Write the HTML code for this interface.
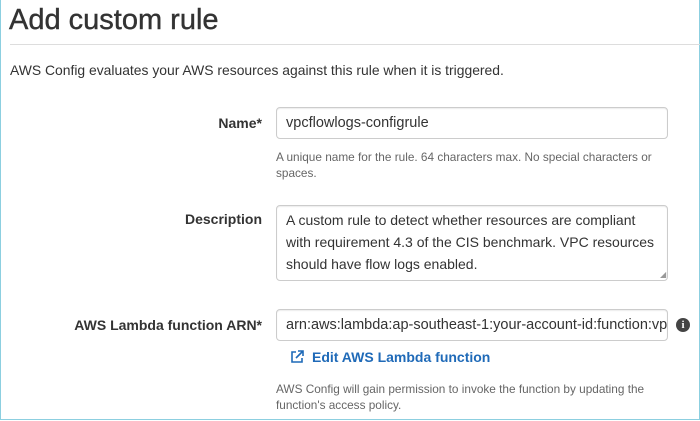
<!DOCTYPE html>
<html><head><style>
body{margin:0;width:700px;height:421px;overflow:hidden;background:#fff;font-family:"Liberation Sans",sans-serif;color:#333}
.frame{position:absolute;left:0;top:0;width:698px;height:419px;border:1px solid #8ccfe0;border-top:none}
.a{position:absolute;white-space:nowrap}
.lbl{font-weight:bold;font-size:14px;text-align:right;width:262px;left:0}
.in{position:absolute;left:276px;width:392px;border:1px solid #ccc;border-radius:4px;box-sizing:border-box;font-size:14.5px;color:#333;padding:0 9px;box-shadow:inset 0 1px 1px rgba(0,0,0,.08)}
.help{font-size:11.8px;color:#666;left:276px;line-height:16px}
</style></head><body>
<div class="frame"></div>
<div class="a" style="left:9px;top:4px;font-size:29px;color:#333;-webkit-text-stroke:0.4px #333">Add custom rule</div>
<div style="position:absolute;left:10px;top:44px;width:690px;height:1px;background:#ddd"></div>
<div class="a" style="left:10px;top:62px;font-size:13.9px">AWS Config evaluates your AWS resources against this rule when it is triggered.</div>
<div class="a lbl" style="top:115px">Name*</div>
<div class="in" style="top:107px;height:32px;line-height:30px">vpcflowlogs-configrule</div>
<div class="a help" style="top:149px">A unique name for the rule. 64 characters max. No special characters or<br>spaces.</div>
<div class="a lbl" style="top:211px">Description</div>
<div class="in" style="top:205px;height:76px;line-height:22px;padding-top:3px;white-space:nowrap;font-size:14px">A custom rule to detect whether resources are compliant<br>with requirement 4.3 of the CIS benchmark. VPC resources<br>should have flow logs enabled.</div>
<div class="a" style="left:660px;top:270px;font-size:8px;color:#999">◢</div>
<div class="a lbl" style="top:317px">AWS Lambda function ARN*</div>
<div class="in" style="top:309px;height:32px;line-height:30px;overflow:hidden;white-space:nowrap">arn:aws:lambda:ap-southeast-1:your-account-id:function:vpc</div>
<div class="a" style="left:676px;top:318px;width:14px;height:14px;border-radius:50%;background:#444;color:#fff;font-size:11px;font-weight:bold;text-align:center;line-height:14px;font-family:'Liberation Serif',serif">i</div>
<svg class="a" style="left:290px;top:350px" width="14" height="14" viewBox="0 0 14 14" fill="none" stroke="#1f6ab8" stroke-width="1.6"><path d="M6 2H2v10h10V8"/><path d="M8 1h5v5M13 1L6 8"/></svg>
<div class="a" style="left:312px;top:349px;font-size:14px;font-weight:bold;color:#1f6ab8">Edit AWS Lambda function</div>
<div class="a help" style="top:381px">AWS Config will gain permission to invoke the function by updating the<br>function's access policy.</div>
</body></html>
